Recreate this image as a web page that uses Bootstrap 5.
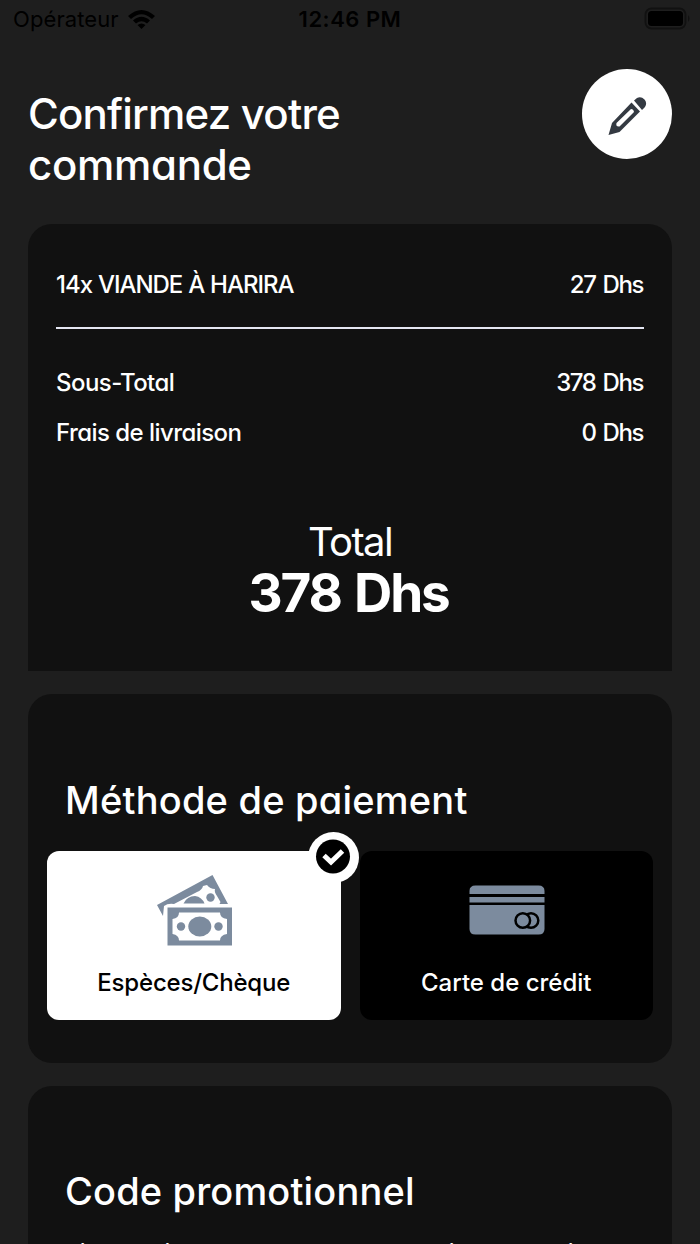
<!DOCTYPE html>
<html lang="fr">
<head>
<meta charset="utf-8">
<meta name="viewport" content="width=device-width, initial-scale=1">
<title>Confirmez votre commande</title>
<link href="https://cdn.jsdelivr.net/npm/bootstrap@5.3.0/dist/css/bootstrap.min.css" rel="stylesheet">
<style>
html,body{background:#1e1e1e;overflow:hidden}
body{height:1244px;font-family:Inter,"Liberation Sans",sans-serif;font-feature-settings:"cv11","ss03";font-weight:500;color:#fff}
.w{display:inline-block;white-space:nowrap}
.status{height:38px;color:#000;font-size:22px;line-height:38px;font-feature-settings:normal}
.carrier{padding-left:13px;font-weight:400;letter-spacing:.1px}
.clock{font-weight:600;letter-spacing:.5px}
.head{height:186px;padding:31px 28px 0}
.title{font-size:42px;line-height:51px;font-weight:500;margin:19px 0 0;letter-spacing:-.3px}
.title-first{letter-spacing:-.8px}
.edit{width:90px;height:90px;background:#fff;border:0;padding:0}
.panel{background:#111;margin:0 28px;border-radius:24px;border:0}
.summary{height:447px;border-radius:24px 24px 0 0;padding:36px 28px 0;font-size:24px;line-height:50px}
.item{letter-spacing:-1.02px;word-spacing:.5px}
.fee{letter-spacing:-.55px}
.price{letter-spacing:-1.4px;word-spacing:2px;margin-right:1px}
.rule{height:2px;background:#e4e6f2;margin:17px 0 29px}
.total{font-size:40px;line-height:46px;font-weight:400;font-feature-settings:normal;letter-spacing:-1.6px;margin-top:61px}
.amount{font-size:53px;line-height:56px;font-weight:700;letter-spacing:-2.2px;word-spacing:3px}
.amount .w{margin-right:3px}
.pay{height:369px;margin-top:23px;padding:0 19px}
.section-title{font-size:38px;line-height:48px;font-weight:500;margin:82px 0 0 18px;letter-spacing:.22px}
.options{gap:19px;margin-top:27px}
.option{height:169px;border-radius:12px;border:0;background:#000;color:#fff;font-size:24px;font-weight:500;line-height:30px;padding:94px 0 0;flex:1 1 0}
.option.chosen{background:#fff;color:#000;letter-spacing:-.2px}
.art{position:absolute;left:0;top:0}
.check{position:absolute;right:-18px;top:-19px;width:51px;height:51px}
.promo{height:158px;border-radius:24px 24px 0 0;margin-top:23px;padding:0 19px}
.promo .section-title{margin-top:81px;letter-spacing:.16px}
.hint{font-size:23px;line-height:30px;letter-spacing:-.06px;margin:23px 0 0 18px}
</style>
</head>
<body>
<div class="status d-flex justify-content-between position-relative">
  <div class="carrier d-flex align-items-center"><span class="w">Opérateur</span>
    <svg class="ms-2" width="29" height="22" viewBox="0 0 29 22"><path d="M1 8Q14.500-4 28 8L25 11Q14.500 1.500 4 11ZM6 12.500Q14.500 5 23 12.500L20 15.500Q14.500 11 9 15.500ZM10.500 17Q14.500 14 18.500 17L14.500 21Z"/></svg>
  </div>
  <div class="clock w position-absolute start-50 translate-middle-x">12:46 PM</div>
  <svg width="60" height="38" viewBox="640 0 60 38"><rect x="645.500" y="8.500" width="40" height="20" rx="6" fill="none" stroke="#111" stroke-width="1.800"/><rect x="648" y="11" width="35" height="15" rx="3.500"/><path d="M688 15q3 3.500 0 7z" fill="#111"/></svg>
</div>
<header class="head d-flex justify-content-between align-items-start">
  <h1 class="title"><span class="w title-first">Confirmez votre</span><br><span class="w">commande</span></h1>
  <button class="edit rounded-circle" aria-label="Modifier"><svg class="d-block" width="90" height="90" viewBox="582 69 90 90"><path fill="#343a42" fill-rule="evenodd" d="M608.500 135L612 123L631.500 102.500L640 111.500L619.500 132ZM616.500 123Q615.500 127 619.500 126.500L634 112Q633.500 109 631 109ZM634 100.500L637 98Q641 96 644.500 99.500Q647.500 103 645 107L642 110Z"/></svg></button>
</header>
<main>
<section class="panel summary">
  <div class="d-flex justify-content-between"><span class="w item">14x VIANDE À HARIRA</span><span class="w price">27 Dhs</span></div>
  <div class="rule"></div>
  <div class="d-flex justify-content-between"><span class="w fee">Sous-Total</span><span class="w price">378 Dhs</span></div>
  <div class="d-flex justify-content-between"><span class="w fee">Frais de livraison</span><span class="w price">0 Dhs</span></div>
  <div class="total text-center"><span class="w">Total</span></div>
  <div class="amount text-center"><span class="w">378 Dhs</span></div>
</section>
<section class="panel pay d-flow-root overflow-hidden">
  <h2 class="section-title"><span class="w">Méthode de paiement</span></h2>
  <div class="options d-flex">
    <button class="option chosen position-relative"><svg class="art" width="294" height="110" viewBox="47 851 294 110"><g fill="#7c8b9e"><path d="M157 905L212.500 875L228 904H219.500L220.500 902L217 896Q214 892 215 889Q210 889 207 885L203 886Q202 890 197 892L174 904Q168 903 164 906L163 916Z"/><path d="M183.500 903.500Q187 896 195 896Q202 897 204.500 903.500Z"/><circle cx="210.500" cy="897.500" r="4.200"/><path fill-rule="evenodd" d="M167.500 907.500H232V945.500H167.500ZM179 912.500Q179 918 172.500 919V934Q179 935 179 940.500H220Q220 935 227 934V919Q220 918 220 912.500Z"/><ellipse cx="199.800" cy="926.500" rx="11.500" ry="10"/><circle cx="181" cy="926.500" r="4.200"/><circle cx="218.500" cy="926.500" r="4.200"/></g></svg>
      <svg class="check" viewBox="0 0 51 51"><circle cx="25.500" cy="25.500" r="25.500" fill="#fff"/><circle cx="25" cy="24.500" r="17"/><path d="M16 23.500L23 30L34.500 19" fill="none" stroke="#fff" stroke-width="5"/></svg>
      <span class="w">Espèces/Chèque</span></button>
    <button class="option position-relative"><svg class="art" width="294" height="110" viewBox="359.500 851 294 110"><path fill="#7c8b9e" d="M469 894V891Q469 885.500 475 885.500H538Q544 885.500 544 891V894ZM469 897H544V902.500H469ZM469 905H544V929Q544 934.500 538 934.500H475Q469 934.500 469 929Z"/><g fill="#7c8b9e" stroke="#000" stroke-width="2.500"><circle cx="530.500" cy="920.500" r="7.300"/><circle cx="522.300" cy="920.500" r="7.300"/></g></svg><span class="w">Carte de crédit</span></button>
  </div>
</section>
<section class="panel promo overflow-hidden">
  <h2 class="section-title"><span class="w">Code promotionnel</span></h2>
  <p class="hint"><span class="w">Si vous disposez d'un code promotionnel, veuillez</span></p>
</section>
</main>
<script src="https://cdn.jsdelivr.net/npm/bootstrap@5.3.0/dist/js/bootstrap.bundle.min.js"></script>
</body>
</html>
